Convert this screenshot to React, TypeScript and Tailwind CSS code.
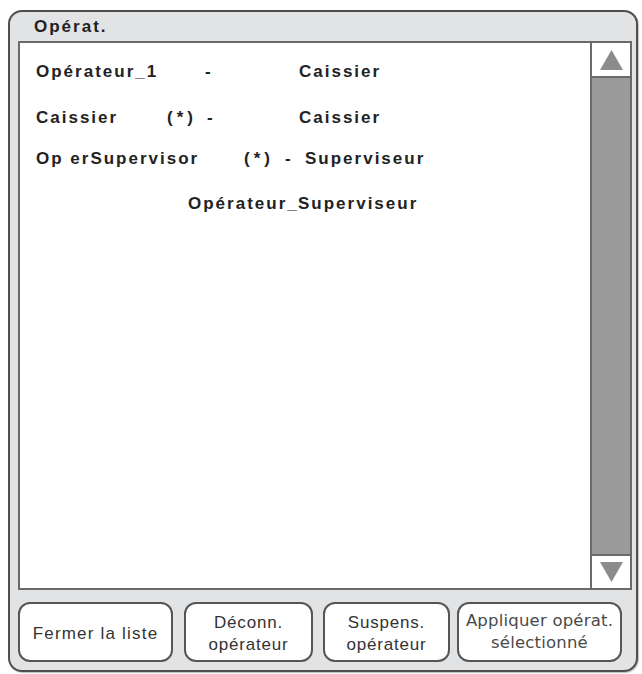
import React from "react";

const listFont = { fontFamily: '"Liberation Sans", Arial, sans-serif' };

function Up() {
  return (
    <svg width="23" height="20" viewBox="0 0 23 20">
      <polygon points="11.5,0 23,20 0,20" fill="#8c8c8c" />
    </svg>
  );
}
function Down() {
  return (
    <svg width="23" height="20" viewBox="0 0 23 20">
      <polygon points="0,0 23,0 11.5,20" fill="#8c8c8c" />
    </svg>
  );
}

export default function App() {
  return (
    <div className="w-[642px] h-[674px] bg-white pt-[10px] pl-[8px]" style={listFont}>
      <div className="w-[630px] h-[662px] border-2 border-[#4f4f4f] rounded-[14px] bg-[#e1e3e5] flex flex-col shadow-[1px_1px_1px_rgba(0,0,0,0.25)]">
        <div className="h-[29px] pl-[24px] flex items-center text-[17px] font-bold tracking-[2px] text-[#1f1f1f]">
          Opérat.
        </div>
        <div className="ml-[8px] mr-[4px] h-[549px] border-2 border-[#6a6a6a] bg-white flex">
          <div className="flex-1 pt-[19px] text-[17px] leading-[20px] font-bold tracking-[2px] text-[#222] whitespace-nowrap">
            <div className="flex pl-[16px]">
              <span className="w-[169px] shrink-0">Opérateur_1</span>
              <span className="w-[94px] shrink-0">-</span>
              <span>Caissier</span>
            </div>
            <div className="flex pl-[16px] mt-[26px]">
              <span className="w-[131px] shrink-0">Caissier</span>
              <span className="w-[40px] shrink-0 tracking-[4px]">(*)</span>
              <span className="w-[92px] shrink-0">-</span>
              <span>Caissier</span>
            </div>
            <div className="flex pl-[16px] mt-[21px]">
              <span className="w-[208px] shrink-0">Op erSupervisor</span>
              <span className="w-[41px] shrink-0 tracking-[4px]">(*)</span>
              <span className="w-[20px] shrink-0">-</span>
              <span>Superviseur</span>
            </div>
            <div className="flex pl-[168px] mt-[25px]">
              <span className="w-[110px] shrink-0">Opérateur_</span>
              <span>Superviseur</span>
            </div>
          </div>
          <div className="w-[40px] border-l-2 border-[#6a6a6a] flex flex-col">
            <div className="h-[35px] bg-white border-b-2 border-[#6a6a6a] flex items-center justify-center">
              <Up />
            </div>
            <div className="flex-1 bg-[#9a9a9a]" />
            <div className="h-[34px] bg-white border-t-2 border-[#6a6a6a] flex items-center justify-center">
              <Down />
            </div>
          </div>
        </div>
        <div className="flex mt-[12px] ml-[8px] h-[60px]">
          <button className="w-[155px] h-[60px] pt-[3px] bg-white border-2 border-[#555] rounded-[12px] text-[17px] tracking-[1.2px] text-[#333] leading-[22px]">
            Fermer la liste
          </button>
          <button className="ml-[11px] w-[129px] h-[60px] pt-[3px] bg-white border-2 border-[#555] rounded-[12px] text-[17px] tracking-[0.8px] text-[#333] leading-[22px]">
            Déconn.<br />opérateur
          </button>
          <button className="ml-[10px] w-[127px] h-[60px] pt-[3px] bg-white border-2 border-[#555] rounded-[12px] text-[17px] tracking-[0.8px] text-[#333] leading-[22px]">
            Suspens.<br />opérateur
          </button>
          <button
            className="ml-[7px] w-[165px] h-[60px] bg-white border-2 border-[#555] rounded-[12px] text-[16.5px] tracking-[0.2px] text-[#4a4a4a] leading-[22px] whitespace-nowrap"
            style={{ fontFamily: '"DejaVu Sans", Verdana, sans-serif' }}
          >
            Appliquer opérat.<br />sélectionné
          </button>
        </div>
      </div>
    </div>
  );
}
